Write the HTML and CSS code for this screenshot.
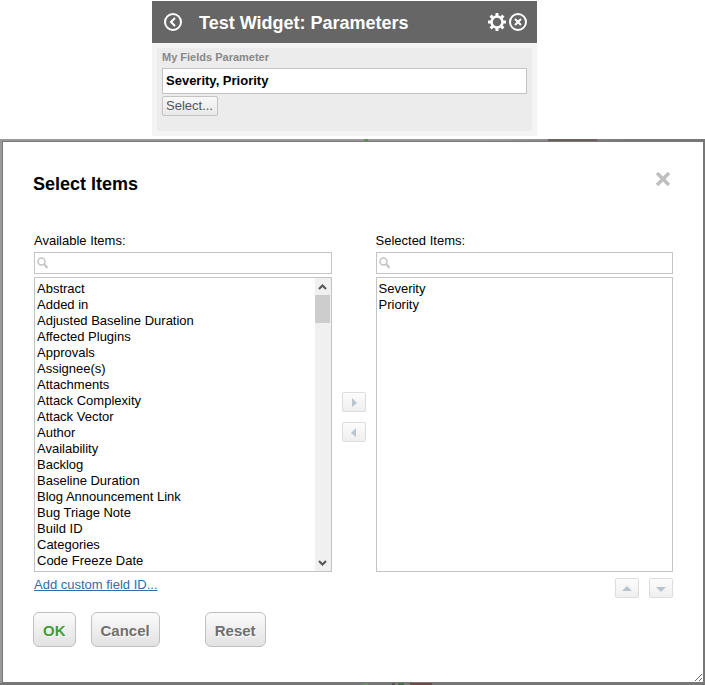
FILE: index.html
```html
<!DOCTYPE html>
<html lang="en">
<head>
<meta charset="utf-8">
<title>Test Widget: Parameters</title>
<link rel="stylesheet" href="styles.css">
</head>
<body>
<section class="widget">
  <header class="widget-header">
    <button class="icon-button" type="button" aria-label="Back">
      <svg width="20" height="20" viewBox="0 0 20 20" fill="none" stroke="#fff" stroke-width="2"><circle cx="10" cy="10" r="8"/><path d="M12 6 8 10l4 4"/></svg>
    </button>
    <h1 class="widget-title">Test Widget: Parameters</h1>
    <button class="icon-button" type="button" aria-label="Settings">
      <svg width="20" height="20" viewBox="0 0 20 20" fill="none" stroke="#fff"><circle cx="10" cy="10" r="5.5" stroke-width="2.500"/><path stroke-width="3" d="M10 1v3M10 16v3M1 10h3M16 10h3M3.600 3.600l2 2M14.400 14.400l2 2M3.600 16.400l2-2M14.400 5.600l2-2"/></svg>
    </button>
    <button class="icon-button" type="button" aria-label="Close widget">
      <svg width="20" height="20" viewBox="0 0 20 20" fill="none" stroke="#fff" stroke-width="2"><circle cx="10" cy="10" r="8"/><path d="m7 7 6 6M13 7l-6 6"/></svg>
    </button>
  </header>
  <div class="widget-body">
    <div class="widget-panel">
      <label class="field-label" for="fields">My Fields Parameter</label>
      <input class="field-input" id="fields" type="text" value="Severity, Priority">
      <button class="select-button" type="button">Select...</button>
    </div>
  </div>
</section>

<div class="backdrop">
  <div class="dialog" role="dialog" aria-labelledby="dialog-title">
    <div class="dialog-header">
      <h2 class="dialog-title" id="dialog-title">Select Items</h2>
      <button class="icon-button close" type="button" aria-label="Close">
        <svg width="16" height="16" viewBox="0 0 16 16" fill="none" stroke="#bfbfbf" stroke-width="3.500"><path d="m2 1 12 12M14 1 2 13"/></svg>
      </button>
    </div>
    <div class="picker">
      <div class="column">
        <label class="list-label" for="available">Available Items:</label>
        <div class="search">
          <svg width="12" height="12" viewBox="0 0 12 12" fill="none" stroke="#c4c4c4" stroke-width="1.5"><circle cx="4.500" cy="4.500" r="3.500"/><path stroke-width="2" d="m7 7 3.500 4"/></svg>
          <input type="text" aria-label="Search available items">
        </div>
        <div class="listbox">
          <select id="available" multiple size="18">
            <option>Abstract</option><option>Added in</option><option>Adjusted Baseline Duration</option><option>Affected Plugins</option><option>Approvals</option><option>Assignee(s)</option><option>Attachments</option><option>Attack Complexity</option><option>Attack Vector</option><option>Author</option><option>Availability</option><option>Backlog</option><option>Baseline Duration</option><option>Blog Announcement Link</option><option>Bug Triage Note</option><option>Build ID</option><option>Categories</option><option>Code Freeze Date</option>
          </select>
          <div class="scrollbar" aria-hidden="true">
            <svg width="17" height="17" viewBox="0 0 17 17" fill="none" stroke="#555" stroke-width="2"><path d="m4 11 3.500-3.500L11 11"/></svg>
            <div class="thumb"></div>
            <svg width="17" height="17" viewBox="0 0 17 17" fill="none" stroke="#555" stroke-width="2"><path d="m4 7 3.500 3.500L11 7"/></svg>
          </div>
        </div>
        <a class="add-link" href="#">Add custom field ID...</a>
      </div>
      <div class="transfer">
        <button class="arrow-button" type="button" aria-label="Add"><svg width="10" height="10" viewBox="0 0 10 10" fill="#b9c5ce"><path d="M3 1l5 5-5 4z"/></svg></button>
        <button class="arrow-button" type="button" aria-label="Remove"><svg width="10" height="10" viewBox="0 0 10 10" fill="#b9c5ce"><path d="M7 1 2 6l5 4z"/></svg></button>
      </div>
      <div class="column">
        <label class="list-label" for="selected">Selected Items:</label>
        <div class="search">
          <svg width="12" height="12" viewBox="0 0 12 12" fill="none" stroke="#c4c4c4" stroke-width="1.5"><circle cx="4.500" cy="4.500" r="3.500"/><path stroke-width="2" d="m7 7 3.500 4"/></svg>
          <input type="text" aria-label="Search selected items">
        </div>
        <div class="listbox">
          <select id="selected" multiple size="18">
            <option>Severity</option><option>Priority</option>
          </select>
        </div>
        <div class="order">
          <button class="arrow-button" type="button" aria-label="Move up"><svg width="10" height="10" viewBox="0 0 10 10" fill="#b9c5ce"><path d="M0 8l5-5 5 5z"/></svg></button>
          <button class="arrow-button" type="button" aria-label="Move down"><svg width="10" height="10" viewBox="0 0 10 10" fill="#b9c5ce"><path d="M0 4h10L5 9z"/></svg></button>
        </div>
      </div>
    </div>
    <div class="actions">
      <button class="action ok" type="button">OK</button>
      <button class="action" type="button">Cancel</button>
      <button class="action reset" type="button">Reset</button>
    </div>
    <svg class="grip" width="8" height="8" viewBox="0 0 8 8" stroke="#666" aria-hidden="true"><path d="M0 7 7 0M4 7l3-3"/></svg>
  </div>
</div>
</body>
</html>
```
FILE: styles.css
```css
* { box-sizing: border-box; }

body {
  margin: 0;
  padding-top: 1px;
  background: #fff;
  color: #000;
  font: 13px/16px "Liberation Sans", Arial, sans-serif;
}

button, input, select { font: inherit; }
h1, h2 { margin: 0; }

.icon-button {
  display: block;
  padding: 0;
  border: 0;
  background: none;
}
.icon-button svg { display: block; }

.widget {
  width: 385px;
  max-width: 100%;
  margin: 0 auto 3px 152px;
  background: #f4f4f4;
}

.widget-header {
  display: flex;
  align-items: center;
  gap: 1px;
  padding: 11px 9px 11px 11px;
  background: #666;
}

.widget-title {
  flex: 1;
  padding: 2px 0 0 15px;
  color: #fff;
  font-size: 18px;
  line-height: 18px;
}

.widget-body { padding: 5px; }

.widget-panel {
  padding: 1px 5px 15px;
  background: #ececec;
}

.field-label {
  display: block;
  padding-bottom: 3px;
  color: #888;
  font-size: 11px;
  font-weight: bold;
}

.field-input {
  display: block;
  width: 100%;
  height: 26px;
  padding: 0 3px 2px;
  border: 1px solid #c4c4c4;
  background: #fff;
  color: #000;
  font-weight: bold;
}

.select-button {
  display: block;
  height: 20px;
  margin-top: 2px;
  padding: 0 4px 0 3px;
  border: 1px solid #c4c4c4;
  border-radius: 2px;
  background: linear-gradient(#f8f8f8, #e8e8e8);
  color: #555;
}

/* Dimmed page edges around the dialog */
.backdrop {
  padding: 2px 1px 2px 2px;
  background:
    linear-gradient(#5c8f5c, #5c8f5c) 364px 0 / 4px 2px no-repeat,
    linear-gradient(#6b615f, #6b615f) 548px 0 / 49px 2px no-repeat,
    linear-gradient(#6a8f6a, #6a8f6a) 363px 100% / 5px 2px no-repeat,
    linear-gradient(90deg, #555 0 3px, #7b7b7b 3px 6px, #486b48 6px 12px, #7b7b7b 12px 18px, #704848 18px 40px) 392px 100% / 40px 2px no-repeat,
    linear-gradient(#777, #777) 0 100% / 100% 2px no-repeat,
    linear-gradient(90deg, #999 0 70%, #777 90%);
}

.dialog {
  position: relative;
  padding: 30px 30px 35px;
  border: 1px solid #777;
  background: #fff;
}

.dialog-header {
  display: flex;
  align-items: flex-start;
  justify-content: space-between;
}

.dialog-title {
  padding-top: 2px;
  font-size: 18px;
  line-height: 20px;
}

.close { margin-right: 2px; }

.picker {
  display: grid;
  grid-template-columns: 1fr 44px 1fr;
  margin-top: 39px;
  padding-left: 1px;
}

.column {
  display: flex;
  flex-direction: column;
  min-width: 0;
}

.list-label { margin-bottom: 3px; }

.search {
  display: flex;
  align-items: center;
  height: 22px;
  margin-bottom: 3px;
  padding-left: 2px;
  border: 1px solid #c4c4c4;
}
.search input {
  flex: 1;
  min-width: 0;
  padding: 0 4px;
  border: 0;
  outline: 0;
  background: none;
}

.listbox {
  display: flex;
  height: 295px;
  border: 1px solid #c4c4c4;
}
.listbox select {
  flex: 1;
  min-width: 0;
  padding: 3px 0 0;
  border: 0;
  border-radius: 0;
  outline: 0;
  background: #fff;
  color: #000;
  scrollbar-width: none;
}
.listbox option {
  min-height: 16px;
  padding: 0 2px;
  line-height: 16px;
}

.scrollbar {
  display: flex;
  flex-direction: column;
  width: 16px;
  overflow: hidden;
  background: #f0f0f0;
}
.thumb {
  height: 28px;
  margin: 0 1px 0 0;
  background: #cdcdcd;
}
.scrollbar svg:last-child { margin-top: auto; }

.add-link {
  align-self: flex-start;
  margin-top: 5px;
  color: #336ca6;
}

.transfer {
  display: flex;
  flex-direction: column;
  align-items: center;
  gap: 10px;
  padding-top: 159px;
}

.arrow-button {
  display: flex;
  align-items: center;
  justify-content: center;
  width: 24px;
  height: 20px;
  padding: 0;
  border: 1px solid #ddd;
  border-radius: 2px;
  background: linear-gradient(#fcfcfc, #efefef);
}

.order {
  display: flex;
  justify-content: flex-end;
  gap: 10px;
  margin-top: 6px;
}

.actions {
  display: flex;
  gap: 15px;
  margin-top: 14px;
}

.action {
  height: 35px;
  padding: 2px 9px 0;
  border: 1px solid #c0c0c0;
  border-radius: 6px;
  background: linear-gradient(#fbfbfb, #e2e2e2);
  color: #6f6f6f;
  font-size: 15px;
  font-weight: bold;
  text-shadow: 1px 1px 0 #fff;
}
.ok { color: #3f9c35; }
.reset { margin-left: 30px; }

.grip {
  position: absolute;
  right: 0;
  bottom: 0;
}
```
